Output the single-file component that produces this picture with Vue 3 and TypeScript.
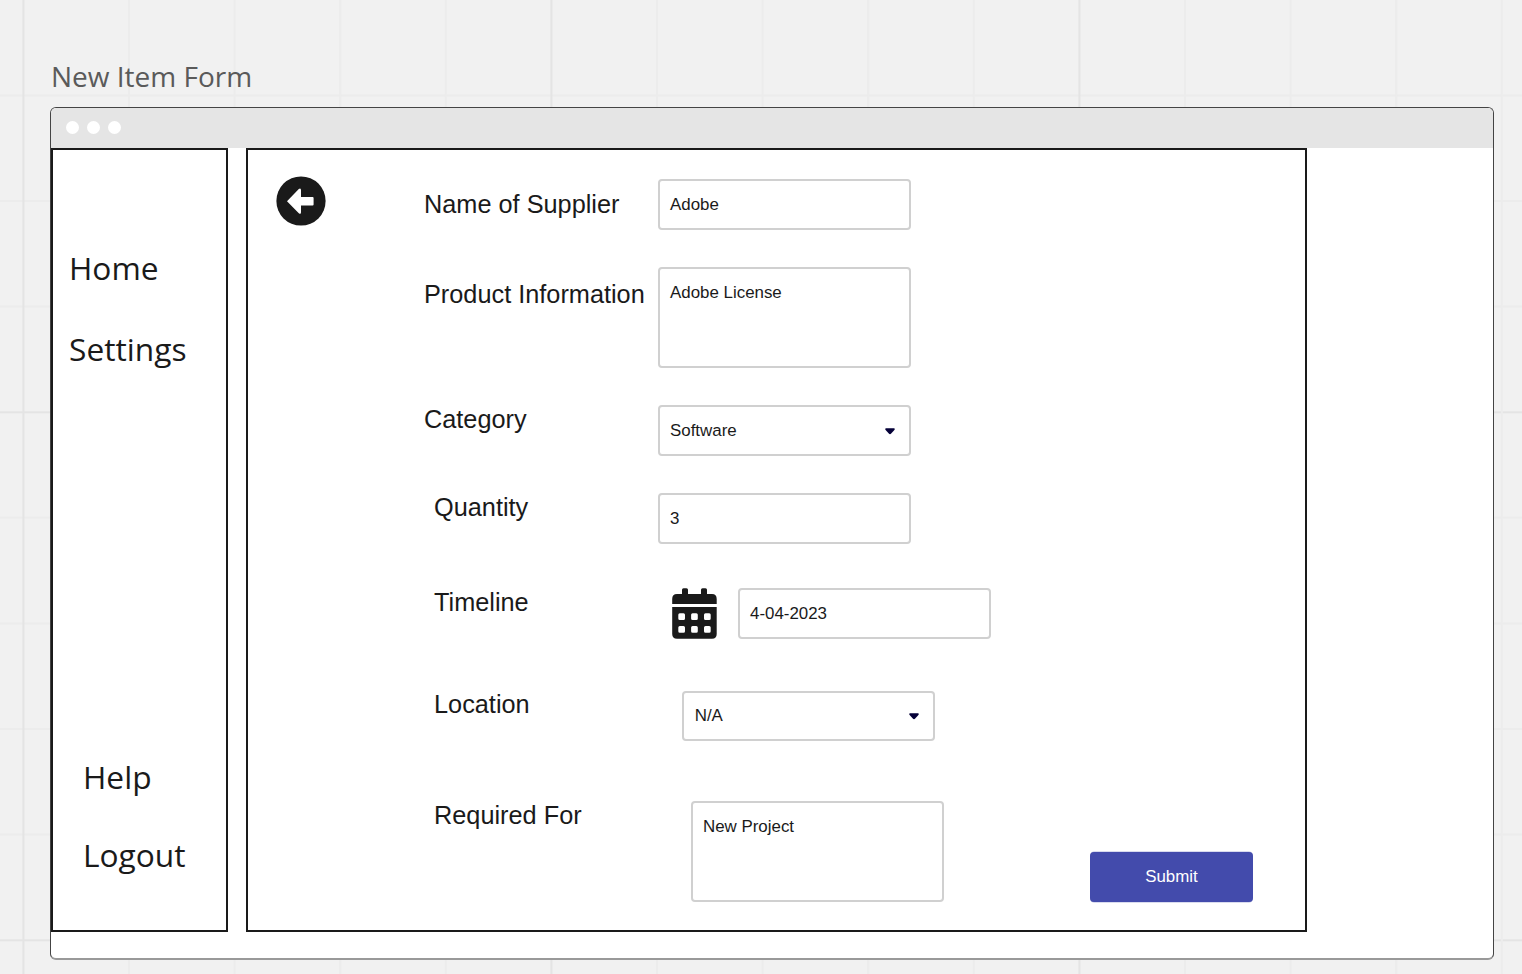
<script setup lang="ts">
interface Field {
  id: string
  label: string
  value: string
  kind: 'text' | 'area' | 'select' | 'date'
}

const fields: Field[] = [
  { id: 'supplier', label: 'Name of Supplier', value: 'Adobe', kind: 'text' },
  { id: 'product', label: 'Product Information', value: 'Adobe License', kind: 'area' },
  { id: 'category', label: 'Category', value: 'Software', kind: 'select' },
  { id: 'quantity', label: 'Quantity', value: '3', kind: 'text' },
  { id: 'timeline', label: 'Timeline', value: '4-04-2023', kind: 'date' },
  { id: 'location', label: 'Location', value: 'N/A', kind: 'select' },
  { id: 'required', label: 'Required For', value: 'New Project', kind: 'area' },
]

const minor = 105.6
const verticals = Array.from({ length: 15 }, (_, i) => ({ at: 23.4 + i * minor, major: i % 5 === 0 }))
const horizontals = Array.from({ length: 9 }, (_, i) => ({ at: 95.4 + i * minor, major: i % 5 === 3 }))
</script>

<template>
  <div class="board">
    <svg class="grid" width="1522" height="974" aria-hidden="true">
      <line v-for="l in horizontals" :key="'h' + l.at" x1="0" x2="1522" :y1="l.at" :y2="l.at" :class="{ major: l.major }" />
      <line v-for="l in verticals" :key="'v' + l.at" y1="0" y2="974" :x1="l.at" :x2="l.at" :class="{ major: l.major }" />
    </svg>

    <h1 class="title">New Item Form</h1>

    <div class="window">
      <div class="bar"><i /><i /><i /></div>
      <div class="body">
        <nav class="side">
          <a class="home">Home</a>
          <a class="settings">Settings</a>
          <a class="help">Help</a>
          <a class="logout">Logout</a>
        </nav>

        <main class="panel">
          <svg class="back" viewBox="0 0 50 50" width="50" height="50">
            <circle cx="25" cy="25" r="24.6" fill="#1a1a1a" />
            <path d="M11 25.200 22.800 13Q25 11.700 25 14.200V21H36.600Q37.600 21 37.600 22V28.400Q37.600 29.400 36.600 29.400H25V36.200Q25 38.700 22.800 37.300Z" fill="#fff" />
          </svg>

          <form class="form" @submit.prevent>
            <div v-for="f in fields" :key="f.id" class="row" :class="f.id">
              <label class="label"><span>{{ f.label }}</span></label>
              <svg v-if="f.kind === 'date'" class="calendar" viewBox="0 0 45 51" width="45" height="51">
                <path
                  fill="#1a1a1a"
                  fill-rule="evenodd"
                  d="M11.500 .2H14.500Q16 .2 16 1.700V6H29V1.700Q29 .2 30.500 .2H33.500Q35 .2 35 1.700V6H40Q44.700 6 44.700 11V16H.2V11Q.2 6 5 6H10V1.700Q10 .2 11.500 .2ZM.2 19H44.700V46Q44.700 50.700 40 50.700H5Q.2 50.700 .2 46ZM7.800 25.300Q6.300 25.300 6.300 26.800V30.500Q6.300 32 7.800 32H11.500Q13 32 13 30.500V26.800Q13 25.300 11.500 25.300ZM20.600 25.300Q19.100 25.300 19.100 26.800V30.500Q19.100 32 20.600 32H24.300Q25.800 32 25.800 30.500V26.800Q25.800 25.300 24.300 25.300ZM33.500 25.300Q32 25.300 32 26.800V30.500Q32 32 33.500 32H37.200Q38.700 32 38.700 30.500V26.800Q38.700 25.300 37.200 25.300ZM7.800 38Q6.300 38 6.300 39.500V43.200Q6.300 44.700 7.800 44.700H11.500Q13 44.700 13 43.200V39.500Q13 38 11.500 38ZM20.600 38Q19.100 38 19.100 39.500V43.200Q19.100 44.700 20.600 44.700H24.300Q25.800 44.700 25.800 43.200V39.500Q25.800 38 24.300 38ZM33.500 38Q32 38 32 39.500V43.200Q32 44.700 33.500 44.700H37.200Q38.700 44.700 38.700 43.200V39.500Q38.700 38 37.200 38Z"
                />
              </svg>
              <div class="field" :class="f.kind">
                <span>{{ f.value }}</span>
                <svg v-if="f.kind === 'select'" class="caret" viewBox="0 0 10 7" width="10" height="7">
                  <path d="M1 .3H9Q10.300 .7 9.400 2L6.200 5.600Q5 6.700 3.800 5.600L.6 2Q-.3 .7 1 .3Z" fill="#050038" />
                </svg>
              </div>
            </div>
          </form>

          <button class="submit" type="button">Submit</button>
        </main>
      </div>
    </div>
  </div>
</template>

<style>
body {
  margin: 0;
  overflow: hidden;
}
</style>

<style scoped>
.board {
  position: relative;
  box-sizing: border-box;
  width: 1522px;
  height: 974px;
  padding: 56px 0 0 50px;
  overflow: hidden;
  background: #f1f1f1;
  color: #1a1a1a;
  font-family: "Liberation Sans", Arial, sans-serif;
}
.grid {
  position: absolute;
  inset: 0;
}
.grid line {
  stroke: #ececec;
  stroke-width: 2;
}
.grid line.major {
  stroke: #e4e4e4;
}
.title {
  position: relative;
  margin: 0 0 11px 1px;
  height: 40px;
  font: 400 28px/40px "Open Sans", sans-serif;
  color: #5a5a5a;
}
.window {
  position: relative;
  box-sizing: border-box;
  width: 1444px;
  height: 853px;
  border: 1px solid #444;
  border-bottom: 2px solid #999;
  border-radius: 6px;
  background: #fff;
  overflow: hidden;
}
.bar {
  display: flex;
  gap: 8px;
  height: 40px;
  padding: 13.4px 0 0 14.6px;
  box-sizing: border-box;
  background: #e5e5e5;
}
.bar i {
  width: 13px;
  height: 13px;
  border-radius: 50%;
  background: #fff;
}
.body {
  display: flex;
  gap: 18px;
}
.side,
.panel {
  box-sizing: border-box;
  height: 784px;
  border: 2px solid #1a1a1a;
}
.side {
  display: flex;
  flex-direction: column;
  width: 177px;
  font: 400 31.7px/44px "Open Sans", sans-serif;
}
.side a {
  white-space: nowrap;
}
.home {
  margin: 96px 0 0 16px;
}
.settings {
  margin: 37px 0 0 16px;
}
.help {
  margin: 384px 0 0 30px;
}
.logout {
  margin: 34px 0 0 30px;
}
.panel {
  display: flex;
  align-items: flex-start;
  width: 1061px;
}
.back {
  flex: none;
  margin: 26px 0 0 28px;
}
.form {
  flex: none;
  width: 666px;
  margin: 29px 0 0 98px;
}
.row {
  display: flex;
  align-items: flex-start;
  margin-bottom: 37px;
}
.label {
  flex: none;
  width: 234px;
  margin-top: -1px;
  box-sizing: border-box;
  font-size: 25.3px;
  line-height: 30px;
  white-space: nowrap;
}
.supplier .label {
  margin-top: 10px;
}
.product .label {
  margin-top: 12px;
}
.location .label {
  margin-top: -2px;
}
.quantity .label,
.timeline .label,
.location .label,
.required .label {
  padding-left: 10px;
}
.quantity {
  margin-bottom: 44px;
}
.timeline {
  margin-bottom: 52px;
}
.location {
  margin-bottom: 60px;
}
.field {
  display: flex;
  justify-content: space-between;
  box-sizing: border-box;
  width: 253px;
  height: 51px;
  padding: 14px 14px 0 10px;
  border: 2px solid #d0d0d0;
  border-radius: 4px;
  font-size: 16.9px;
  line-height: 20px;
}
.field.area {
  height: 101px;
}
.location .field {
  height: 50px;
  margin-left: 24px;
  padding: 13px 13.6px 0 10.7px;
}
.required .field {
  margin-left: 33px;
}
.calendar {
  flex: none;
  margin: 0 21px 0 14px;
}
.caret {
  margin-top: 7px;
}
.submit {
  width: 163px;
  height: 50px;
  margin: 702px 0 0 0;
  padding: 0 0 1px;
  border: 0;
  border-radius: 4px;
  background: #434bac;
  box-shadow: 0 -1px 0 -0.5px #b4b7dd, 0 1px 0 -0.5px #b4b7dd;
  color: #fff;
  font: 400 16.9px/20px "Liberation Sans", Arial, sans-serif;
}
</style>
